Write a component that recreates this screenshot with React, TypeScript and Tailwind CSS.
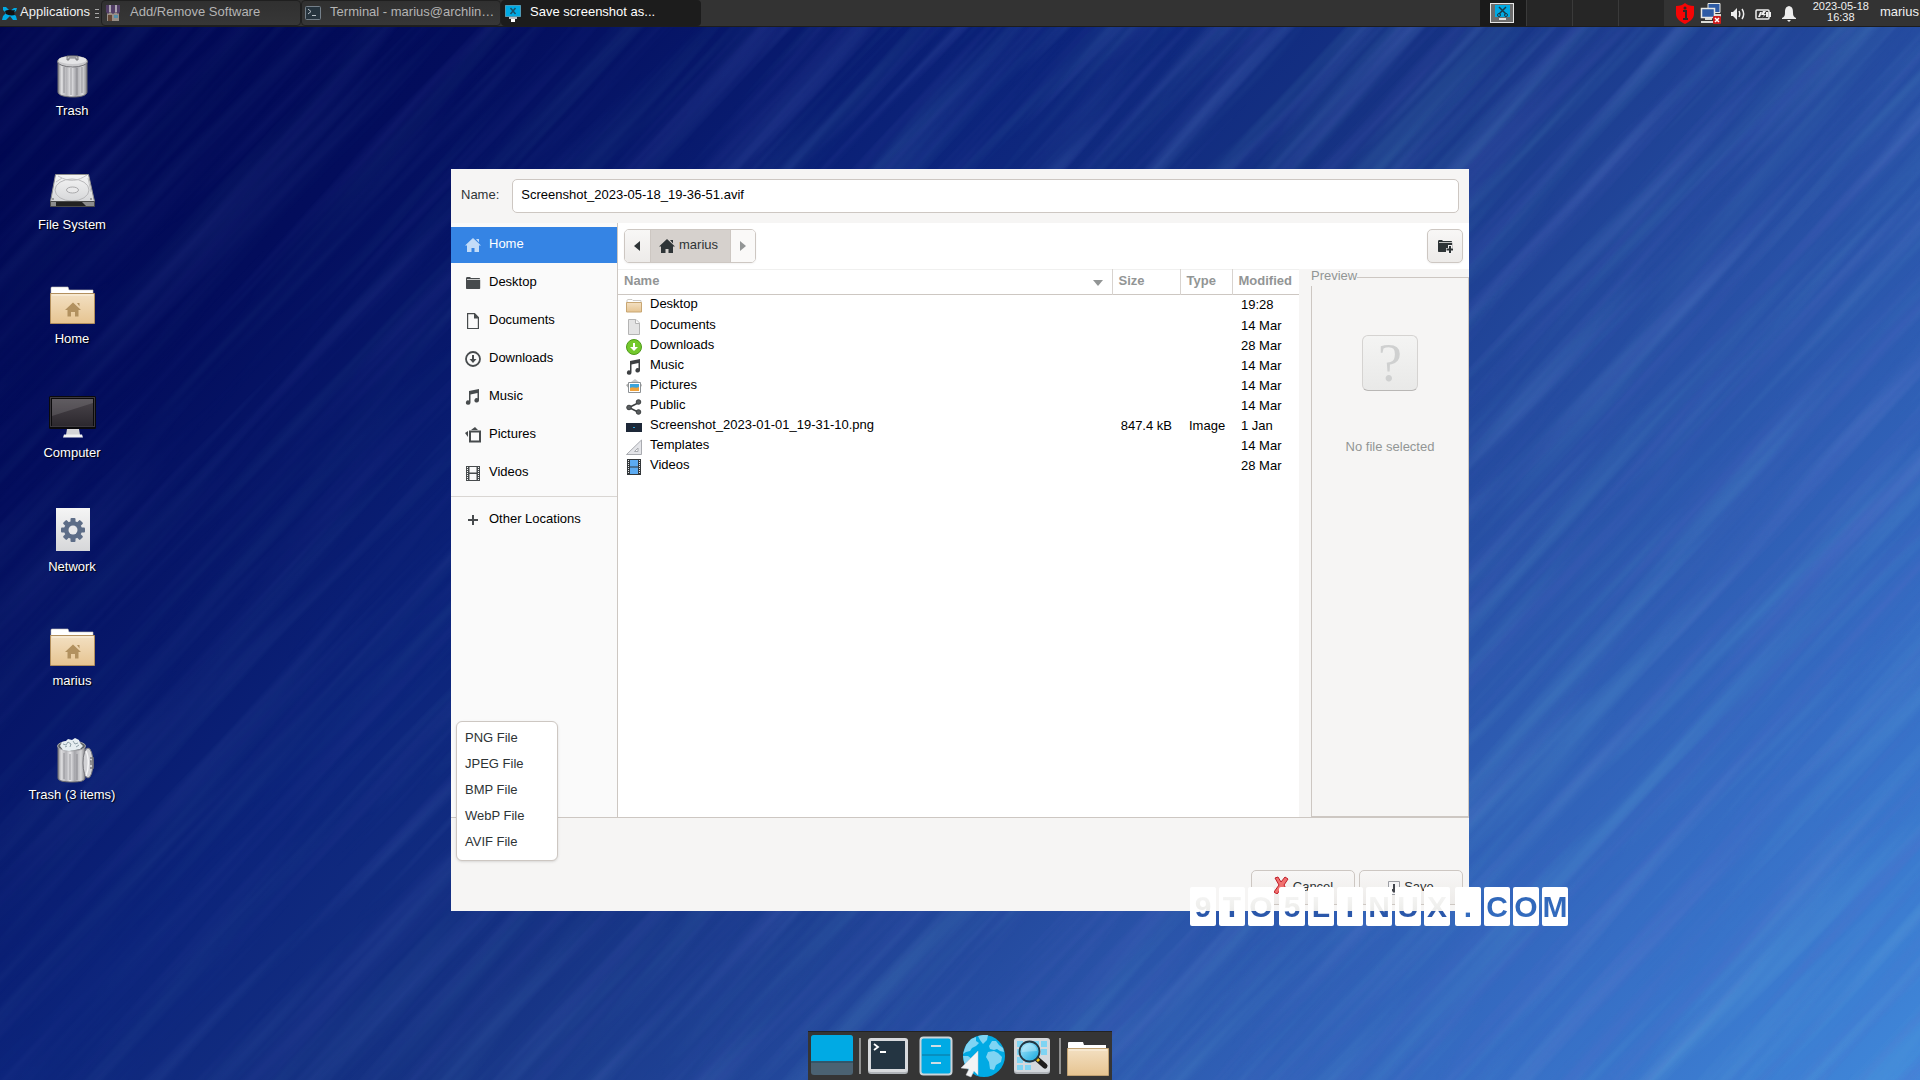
import type { ReactNode } from "react";

function Wallpaper() {
  return (
    <svg className="absolute inset-0 -z-10 h-full w-full" viewBox="0 0 1920 1080" preserveAspectRatio="none" aria-hidden="true">
      <defs>
        <linearGradient id="sky" gradientUnits="userSpaceOnUse" x1="0" y1="0" x2="1500" y2="1500">
          <stop offset="0" stopColor="#00064e" />
          <stop offset="0.17" stopColor="#030d5c" />
          <stop offset="0.36" stopColor="#0c247b" />
          <stop offset="0.5" stopColor="#163384" />
          <stop offset="0.67" stopColor="#274fa4" />
          <stop offset="0.85" stopColor="#366dc4" />
          <stop offset="1" stopColor="#4088da" />
        </linearGradient>
        <linearGradient id="fade" x1="0" y1="0" x2="1" y2="0">
          <stop offset="0" stopColor="#444" />
          <stop offset="0.5" stopColor="#bbb" />
          <stop offset="1" stopColor="#fff" />
        </linearGradient>
        <mask id="fadeMask">
          <rect width="1920" height="1080" fill="url(#fade)" />
        </mask>
        <filter id="light" x="0" y="0" width="1" height="1">
          <feTurbulence type="fractalNoise" baseFrequency="0.0022 0.045" numOctaves="3" seed="7" />
          <feColorMatrix values="0 0 0 0 0.2  0 0 0 0 0.6  0 0 0 0 0.8  2 0 0 0 -0.9" />
        </filter>
        <filter id="dark" x="0" y="0" width="1" height="1">
          <feTurbulence type="fractalNoise" baseFrequency="0.0022 0.055" numOctaves="3" seed="21" />
          <feColorMatrix values="0 0 0 0 0.12  0 0 0 0 0.15  0 0 0 0 0.6  2 0 0 0 -0.9" />
        </filter>
      </defs>
      <rect width="1920" height="1080" fill="url(#sky)" />
      <g mask="url(#fadeMask)">
        <g transform="rotate(-47 960 540)">
          <rect x="-300" y="-700" width="2500" height="2500" filter="url(#light)" opacity="0.22" />
          <rect x="-300" y="-700" width="2500" height="2500" filter="url(#dark)" opacity="0.3" />
        </g>
      </g>
    </svg>
  );
}

/* ---------- desktop icons ---------- */

function Gradients() {
  return (
    <svg className="absolute h-0 w-0" aria-hidden="true">
      <defs>
        <linearGradient id="metal" x1="0" y1="0" x2="1" y2="0">
          <stop offset="0" stopColor="#8a8a8e" />
          <stop offset="0.12" stopColor="#dcdcde" />
          <stop offset="0.3" stopColor="#b4b4b8" />
          <stop offset="0.45" stopColor="#e8e8ea" />
          <stop offset="0.62" stopColor="#a5a5aa" />
          <stop offset="0.85" stopColor="#d8d8da" />
          <stop offset="1" stopColor="#858589" />
        </linearGradient>
        <linearGradient id="paper" x1="0" y1="0" x2="0" y2="1">
          <stop offset="0" stopColor="#f5f5f5" />
          <stop offset="1" stopColor="#d6d7d9" />
        </linearGradient>
        <linearGradient id="manila" x1="0" y1="0" x2="0" y2="1">
          <stop offset="0" stopColor="#f3e0c2" />
          <stop offset="1" stopColor="#e6c491" />
        </linearGradient>
        <linearGradient id="screen" x1="0" y1="0" x2="0" y2="1">
          <stop offset="0" stopColor="#4a454b" />
          <stop offset="1" stopColor="#2c282e" />
        </linearGradient>
        <linearGradient id="lens" x1="0" y1="0" x2="1" y2="1">
          <stop offset="0" stopColor="#b5ecff" />
          <stop offset="1" stopColor="#0ea5dc" />
        </linearGradient>
      </defs>
    </svg>
  );
}

function Icon48({ children }: { children: ReactNode }) {
  return (
    <svg className="h-12 w-12 shrink-0" viewBox="0 0 48 48" aria-hidden="true">
      {children}
    </svg>
  );
}

function TrashIcon() {
  return (
    <Icon48>
      <path d="M10 10v31c0 3 6 5 15 5s14-2 14-5V10z" fill="url(#metal)" stroke="#6d6d72" />
      <path d="M16 16v26M23 17v27M29 17v27M34 16v26" stroke="#828288" strokeWidth="2" opacity="0.4" />
      <ellipse cx="24.500" cy="10.500" rx="15" ry="5.500" fill="#c9c9cc" stroke="#727277" />
      <ellipse cx="24.500" cy="9" rx="14" ry="4" fill="#e4e4e6" />
      <path d="M19 9V5h11v4h-2V7h-7v2z" fill="#bcbcbf" stroke="#66666b" strokeWidth="0.800" />
    </Icon48>
  );
}

function FullTrashIcon() {
  return (
    <Icon48>
      <path d="M10 12v31c0 3 6 4 14 4s13-1 13-4V12z" fill="url(#metal)" stroke="#6d6d72" />
      <path d="M16 18v26M22 19v26M29 19v26" stroke="#828288" strokeWidth="2" opacity="0.4" />
      <ellipse cx="23.500" cy="11" rx="14" ry="5" fill="#5f6468" stroke="#a8a8ac" />
      <path d="M12 11l2-4 4-1 2-2 4 1 3-2 4 2 1 3 3 3-3 3-5 1-6 1-6-1z" fill="#e6eef1" />
      <path d="M15 9l3 1 2-3 3 2-1 3M25 6l2 3 3-1M28 12l3-2M17 12l2-1" stroke="#8fa1a8" fill="none" />
      <ellipse cx="40" cy="28" rx="5" ry="15" fill="#d2d2d5" stroke="#77777c" />
      <path d="M38 16c3 6 3 18 0 25" stroke="#f5f5f6" fill="none" strokeWidth="1.500" />
      <path d="M42 23h3v10h-3M42 26h1v4" fill="none" stroke="#77777c" strokeWidth="1.500" />
    </Icon48>
  );
}

function DriveIcon() {
  return (
    <Icon48>
      <path d="M7.500 9.500h33l6 27h-44z" fill="url(#paper)" stroke="#8f8f8f" />
      <ellipse cx="24" cy="25" rx="17" ry="11" fill="none" stroke="#b8b8ba" />
      <ellipse cx="24.500" cy="25" rx="6" ry="3" fill="#e9e9ea" stroke="#aaaaac" />
      <path d="M10 11c12 7 20 5 29-1M8 17l6-4M40 13l3 14" stroke="#c2c2c4" fill="none" />
      <circle cx="5" cy="34" r="1" fill="#888" />
      <circle cx="43" cy="34" r="1" fill="#888" />
      <path d="M2.500 36.500h44v5h-44z" fill="#8d8d8d" stroke="#4a4a4a" />
      <path d="M8 37h26l4 4H8z" fill="#222" />
    </Icon48>
  );
}

function FolderShape() {
  return (
    <>
      <path d="M3 9a1 1 0 0 1 1-1h16l1 3h24v6H3z" fill="#fff" stroke="#c7c3bb" strokeWidth="0.600" />
      <path d="M2.500 14.500h44v30h-44z" fill="url(#manila)" stroke="#b28f5d" />
      <path d="M4 16h41" stroke="#fbf2e1" />
    </>
  );
}

function HomeFolderIcon() {
  return (
    <Icon48>
      <FolderShape />
      <path d="M25 23.500l8 7.500h-2.500v6.500H27V33h-4v4.500h-3.500V31H17zM29 24h2.500v3.500z" fill="#b2915f" />
    </Icon48>
  );
}

function ComputerIcon() {
  return (
    <Icon48>
      <path d="M19 36h12l1 6H18z" fill="#d5d5d7" />
      <path d="M16 41.500h18l1 3H15z" fill="#f2f2f2" />
      <rect x="1" y="3" width="47" height="33" rx="1.500" fill="#0b0a0c" />
      <rect x="2.500" y="4.500" width="44" height="29" fill="none" stroke="#3b383d" />
      <rect x="4" y="6" width="41" height="27" fill="url(#screen)" />
      <path d="M4 6h41v4L4 23z" fill="#fff" opacity="0.12" />
    </Icon48>
  );
}

function NetworkIcon() {
  return (
    <Icon48>
      <rect x="8" y="1" width="34" height="43" fill="url(#paper)" />
      <g fill="#5d6d87">
        <circle cx="25" cy="23" r="9" />
        {[0, 45, 90, 135, 180, 225, 270, 315].map((a) => (
          <rect key={a} x="22.500" y="11" width="5" height="6" rx="1" transform={`rotate(${a} 25 23)`} />
        ))}
      </g>
      <circle cx="25" cy="23" r="4.500" fill="#e9e9ea" />
    </Icon48>
  );
}

const desktopItems = [
  { label: "Trash", icon: <TrashIcon /> },
  { label: "File System", icon: <DriveIcon /> },
  { label: "Home", icon: <HomeFolderIcon /> },
  { label: "Computer", icon: <ComputerIcon /> },
  { label: "Network", icon: <NetworkIcon /> },
  { label: "marius", icon: <HomeFolderIcon /> },
  { label: "Trash (3 items)", icon: <FullTrashIcon /> },
];

/* ---------- top panel ---------- */

function XfceMouse() {
  return (
    <svg className="h-4 w-4 shrink-0" viewBox="0 0 16 16" aria-hidden="true">
      <path d="M1 2l3 0 4 4 4-3 3 0-1 3-3 2 3 3 1 4-4 0-3-4-4 4-4 0 1-4 3-3-3-3z" fill="#00aae4" />
      <path d="M3 6c3-2 6 0 10-1-1 2-1 4 0 5-4 1-7 0-9-1z" fill="#111" />
    </svg>
  );
}

function ShopIcon() {
  return (
    <svg className="h-5 w-4 shrink-0 opacity-80" viewBox="0 0 16 20" aria-hidden="true">
      <rect x="2" y="7" width="12" height="11" fill="#b0a49b" />
      <path d="M1 2h14v7l-2 2-2-2-3 2-3-2-2 2-2-2z" fill="#5a4173" />
      <path d="M4 2h2v7H4zM10 2h2v7h-2z" fill="#c9c0d0" />
      <rect x="3" y="12" width="4" height="6" fill="#6e4b36" />
      <rect x="9" y="12" width="4" height="3" fill="#5aa3c7" />
    </svg>
  );
}

function TermIcon() {
  return (
    <svg className="h-5 w-4 shrink-0" viewBox="0 0 16 20" aria-hidden="true">
      <rect x="0.500" y="3.500" width="15" height="13" rx="1" fill="#26343e" stroke="#75808a" />
      <path d="M3 6l3 2.500L3 11M7 12.500h4" stroke="#b8c0c6" fill="none" />
    </svg>
  );
}

function ShotIcon() {
  return (
    <svg className="h-5 w-4 shrink-0" viewBox="0 0 16 20" aria-hidden="true">
      <rect x="0.500" y="2.500" width="15" height="11" fill="#00aae4" stroke="#8fd3ec" strokeDasharray="1 1" />
      <path d="M5.500 5l5 6M10.500 5l-5 6" stroke="#1b4f66" strokeWidth="1.500" />
      <path d="M4 14h8v2H4z" fill="#b9bec3" />
      <path d="M6 16h4v3H6z" fill="#fff" />
    </svg>
  );
}

const tasks = [
  { title: "Add/Remove Software", icon: <ShopIcon />, active: false },
  { title: "Terminal - marius@archlin…", icon: <TermIcon />, active: false },
  { title: "Save screenshot as...", icon: <ShotIcon />, active: true },
];

function Tray() {
  return (
    <div className="flex items-center pl-3">
      <svg className="h-6 w-[18px]" viewBox="0 0 18 24" aria-label="Updates">
        <path d="M9 2c2 2 5 3 9 3v8c0 5-5 8-9 10-4-2-9-5-9-10V5c4 0 7-1 9-3z" fill="#f50505" />
        <path d="M7 10h3v8M7 18h5" stroke="#2b2b2b" strokeWidth="2" fill="none" />
        <circle cx="9" cy="7" r="1.500" fill="#2b2b2b" />
      </svg>
      <svg className="ml-[6px] h-6 w-[22px]" viewBox="0 0 22 24" aria-label="Network">
        <path d="M8 2.500h12v9H8z" fill="#2e5ba5" stroke="#e8e8e4" />
        <path d="M14 13h7v3h-7z" fill="#dcdcd6" />
        <path d="M1.500 7.500h13v9h-13z" fill="#2e5ba5" stroke="#e8e8e4" strokeWidth="1.500" />
        <path d="M5 17h7v2H5zM1 20h13v2H1z" fill="#dcdcd6" />
        <rect x="13" y="15" width="8" height="8" rx="1" fill="#cc1b1b" />
        <path d="M15 17l4 4M19 17l-4 4" stroke="#fff" strokeWidth="1.500" />
      </svg>
      <svg className="ml-[8px] h-6 w-4" viewBox="0 0 16 24" aria-label="Volume">
        <path d="M1 11h2l4-4v12l-4-4H1z" fill="#eee" />
        <path d="M9 10c1 2 1 4 0 6M12 8c2 3 2 7 0 10" stroke="#eee" strokeWidth="1.500" fill="none" />
      </svg>
      <svg className="ml-[9px] h-6 w-4" viewBox="0 0 16 24" aria-label="Battery">
        <rect x="1" y="9" width="13" height="9" rx="1" fill="none" stroke="#eee" strokeWidth="1.500" />
        <path d="M15 11v5" stroke="#eee" strokeWidth="2" />
        <path d="M3 16l2-5h2L5 16zM8 10l-2 4h3l-2 3 4-4H9l2-3zM11 11h2v5h-2z" fill="#eee" />
      </svg>
      <svg className="ml-[10px] h-6 w-4" viewBox="0 0 16 24" aria-label="Notifications">
        <path d="M8 5c4 1 4 4 4 7 0 3 1 4 3 5v1H1v-1c2-1 3-2 3-5 0-3 0-6 4-7z" fill="#eee" />
        <path d="M6 19h4l-2 2z" fill="#eee" />
      </svg>
    </div>
  );
}

function TopPanel() {
  return (
    <header className="flex h-[27px] items-stretch border-b border-[#1d1d1d] bg-[#333333] text-[13px] text-[#f0f0f0]">
      <button className="flex items-center gap-[2px] pl-[2px]">
        <XfceMouse />
        <span className="pb-[3px]">Applications</span>
      </button>
      <div className="mr-[2px] ml-[5px] flex flex-col justify-center gap-[3px]">
        <i className="h-px w-1 bg-[#aaa]" />
        <i className="h-px w-1 bg-[#aaa]" />
        <i className="h-px w-1 bg-[#aaa]" />
      </div>
      <nav className="flex flex-1 items-stretch">
        {tasks.map((t) => (
          <button
            key={t.title}
            className={
              t.active
                ? "flex w-[200px] items-center gap-[9px] rounded-sm bg-[#1c1c1c] pr-1 pl-1 text-left text-white"
                : "flex w-[200px] items-center gap-[9px] rounded-sm border border-[#1f1f1f] bg-linear-to-b from-[#303030] to-[#373737] pl-[3px] text-left text-[#b4b4b4]"
            }
          >
            {t.icon}
            <span className="pb-[3px] whitespace-nowrap">{t.title}</span>
          </button>
        ))}
      </nav>
      <div className="flex">
        <button aria-label="Workspace 1" className="flex w-[46px] items-center justify-center bg-[#1a1a1a] pr-[2px]">
          <svg className="h-[20px] w-6" viewBox="0 0 24 20" aria-hidden="true">
            <rect x="0.500" y="0.500" width="23" height="19" fill="#6c6c6c" stroke="#e6e6e6" />
            <rect x="5" y="2" width="15" height="12" fill="#00aae4" />
            <path d="M9 4l7 7M16 4l-7 7" stroke="#1b3947" strokeWidth="1.500" />
            <circle cx="9" cy="12" r="1.500" fill="none" stroke="#1b3947" />
            <circle cx="16" cy="12" r="1.500" fill="none" stroke="#1b3947" />
            <path d="M9 15h7v2H9z" fill="#ddd" />
          </svg>
        </button>
        <button aria-label="Workspace 2" className="w-[46px] border-l border-[#3a3a3a] bg-[#262626]" />
        <button aria-label="Workspace 3" className="w-[46px] border-l border-[#3a3a3a] bg-[#262626]" />
        <button aria-label="Workspace 4" className="w-[46px] border-l border-[#3a3a3a] bg-[#262626]" />
      </div>
      <Tray />
      <div className="ml-4 flex flex-col items-center text-[11px] leading-[11px]">
        <span className="pt-px">2023-05-18</span>
        <span>16:38</span>
      </div>
      <button className="ml-[11px] pr-px pb-[2px]">marius</button>
    </header>
  );
}

/* ---------- file chooser icons, 16px ---------- */

function Icon16({ children }: { children: ReactNode }) {
  return (
    <svg className="h-4 w-4 shrink-0" viewBox="0 0 16 16" fill="currentColor" aria-hidden="true">
      {children}
    </svg>
  );
}

const house = <path d="M8 1l8 7.500h-2V15H9.500v-4h-3v4H2V8.500H0zM11 2h3v3.500z" />;
const symFolder = <path d="M1 3.500C1 2.500 1.500 2 2.500 2H5l1 1h8c.7 0 1 .4 1 1H2v.800h13.200V13c0 .6-.4 1-1 1H2c-.6 0-1-.4-1-1z" />;
const note = (
  <path d="M4 2L14 0v11.500a2.300 2.200 0 1 1-1.500-2.300V4L5.500 5.400v8.100A2.300 2.200 0 1 1 4 11.500z" />
);

const places = [
  { label: "Home", icon: house },
  { label: "Desktop", icon: symFolder },
  {
    label: "Documents",
    icon: (
      <>
        <path d="M2.600.6h7l3.800 4v11H2.600z" fill="none" stroke="currentColor" strokeWidth="1.200" />
        <path d="M9 0v5.500h5z" />
      </>
    ),
  },
  {
    label: "Downloads",
    icon: (
      <>
        <circle cx="8" cy="8" r="7" fill="none" stroke="currentColor" strokeWidth="1.800" />
        <path d="M7 4h2v4h2.500L8 12 4.500 8H7z" />
      </>
    ),
  },
  { label: "Music", icon: note },
  {
    label: "Pictures",
    icon: (
      <>
        <path d="M5 4.500h10v10H5z" fill="none" stroke="currentColor" strokeWidth="2" />
        <path d="M6 3l4-3 3 3zM0 6l3-2v6z" />
      </>
    ),
  },
  {
    label: "Videos",
    icon: (
      <>
        <path d="M1 1h14v15H1zM4.500 2v5.500h7V2zM4.500 9v6h7V9z" fillRule="evenodd" />
        <path d="M2.500 2v13M13.500 2v13" stroke="#fafafa" strokeDasharray="1 1" />
      </>
    ),
  },
];

const fileIcons = {
  folder: (
    <>
      <path d="M1 2.500C1 2 1.500 1.500 2 1.500h4l1 1h8v3H1z" fill="#fff" stroke="#b9b5ae" strokeWidth="0.700" />
      <path d="M.5 4.500h15v9.500H.5z" fill="url(#manila)" stroke="#c8a672" />
    </>
  ),
  doc: (
    <>
      <path d="M2.500.5H10l3.500 3.500v11.500h-11z" fill="#e4e4e4" stroke="#b4b4b4" />
      <path d="M9.500.5V4.500h4" fill="#fafafa" stroke="#b4b4b4" />
    </>
  ),
  down: (
    <>
      <circle cx="8" cy="8" r="7.500" fill="#74c92d" stroke="#4e9a1a" />
      <path d="M7 4h2v4h3l-4 4-4-4h3z" fill="#fff" />
    </>
  ),
  music: <g fill="#3d4042">{note}</g>,
  pictures: (
    <>
      <path d="M5 3l4-3 4 3z" fill="#c4c7c9" />
      <path d="M0 6l3-2v6zM16 6l-2-2v6z" fill="#aaa" />
      <path d="M2.500 3.500h12v10h-12z" fill="#fff" stroke="#8d9194" />
      <path d="M4 5h9v4H4z" fill="#3aa4dd" />
      <path d="M4 9c3-2 5 1 9-1v4H4z" fill="#efa13a" />
    </>
  ),
  share: (
    <g fill="#585c5e" stroke="#3d4042">
      <path d="M3 8.500l10-5M3 8.500l10 5" strokeWidth="1.500" />
      <circle cx="3" cy="8.500" r="2.300" />
      <circle cx="12.500" cy="3" r="2.300" />
      <circle cx="12.500" cy="13" r="2.300" />
    </g>
  ),
  shot: (
    <>
      <path d="M0 4h16v9H0z" fill="#1d2838" />
      <path d="M7 8h2v1H7z" fill="#2aa0d8" />
    </>
  ),
  template: (
    <>
      <path d="M15.500 1v14.500H.5z" fill="#e3e4e8" stroke="#a9abb0" />
      <path d="M12 9v3.500H8.500z" fill="#fff" stroke="#a9abb0" />
    </>
  ),
  video: (
    <>
      <path d="M1 0h14v16H1z" fill="#33373a" />
      <path d="M2.500 1v14M13.500 1v14" stroke="#e8e8e8" strokeDasharray="1 1" />
      <path d="M4 1h8v6.500H4zM4 8.500h8V15H4z" fill="#5cabf2" />
    </>
  ),
};

type FileRow = { name: string; icon: keyof typeof fileIcons; size?: string; type?: string; modified: string };

const files: FileRow[] = [
  { name: "Desktop", icon: "folder", modified: "19:28" },
  { name: "Documents", icon: "doc", modified: "14 Mar" },
  { name: "Downloads", icon: "down", modified: "28 Mar" },
  { name: "Music", icon: "music", modified: "14 Mar" },
  { name: "Pictures", icon: "pictures", modified: "14 Mar" },
  { name: "Public", icon: "share", modified: "14 Mar" },
  { name: "Screenshot_2023-01-01_19-31-10.png", icon: "shot", size: "847.4 kB", type: "Image", modified: "1 Jan" },
  { name: "Templates", icon: "template", modified: "14 Mar" },
  { name: "Videos", icon: "video", modified: "28 Mar" },
];

const formats = ["PNG File", "JPEG File", "BMP File", "WebP File", "AVIF File"];

/* ---------- save dialog ---------- */

function PlacesSidebar() {
  return (
    <aside className="w-[167px] shrink-0 border-r border-[#cdc7c2] bg-[#fafafa] pt-1">
      <ul className="flex flex-col gap-[2px]">
        {places.map((p, i) => (
          <li key={p.label}>
            <button
              className={
                i === 0
                  ? "flex h-9 w-full items-center gap-2 bg-[#3584e4] pl-[14px] text-[#c3dcf8]"
                  : "flex h-9 w-full items-center gap-2 pl-[14px] text-[#474b4d]"
              }
            >
              <Icon16>{p.icon}</Icon16>
              <span className={i === 0 ? "pb-[3px] text-white" : "pb-[3px] text-black"}>{p.label}</span>
            </button>
          </li>
        ))}
      </ul>
      <div className="mt-[5px] border-t border-[#d9d6d3] pt-[5px]">
        <button className="flex h-9 w-full items-center gap-2 pl-[14px] text-[#474b4d]">
          <Icon16>
            <path d="M7 3h2v4h4v2H9v4H7V9H3V7h4z" />
          </Icon16>
          <span className="pb-[3px] text-black">Other Locations</span>
        </button>
      </div>
    </aside>
  );
}

function PathBar() {
  return (
    <div className="flex h-[46px] items-start justify-between bg-white pt-[6px] pr-[6px] pl-[6px]">
      <div className="flex h-[34px] overflow-hidden rounded-[5px] border border-[#cdc7c2] text-[#2e3436] shadow-xs">
        <button aria-label="Back" className="flex w-[25px] items-center justify-center bg-linear-to-b from-[#f8f7f6] to-[#edebe9] pr-[2px]">
          <svg className="h-[10px] w-[6px]" viewBox="0 0 6 10" aria-hidden="true">
            <path d="M6 0v10L0 5z" fill="#2e3436" />
          </svg>
        </button>
        <button className="flex w-[81px] items-center gap-1 border-x border-[#cdc7c2] bg-[#d6d1cd] pl-2">
          <Icon16>{house}</Icon16>
          <span className="pb-[3px]">marius</span>
        </button>
        <button aria-label="Forward" disabled className="flex w-6 items-center justify-center bg-[#faf9f8]">
          <svg className="h-[10px] w-[6px]" viewBox="0 0 6 10" aria-hidden="true">
            <path d="M0 0v10l6-5z" fill="#929595" />
          </svg>
        </button>
      </div>
      <button
        aria-label="Create Folder"
        className="flex h-[34px] w-9 items-center justify-center rounded-[5px] border border-[#cdc7c2] bg-linear-to-b from-[#f8f7f6] to-[#edebe9] text-[#2e3436] shadow-xs"
      >
        <Icon16>
          {symFolder}
          <path d="M11 7h4v3h2v4h-2v3h-4v-3H9v-4h2z" fill="#f2f1f0" />
          <path d="M12 8h2v2.500h2.500v2H14V15h-2v-2.500H9.500v-2H12z" />
        </Icon16>
      </button>
    </div>
  );
}

function FileList() {
  return (
    <div className="min-w-0 flex-1 bg-white">
      <table className="w-full table-fixed border-collapse border-spacing-0 text-black">
        <colgroup>
          <col />
          <col className="w-[68px]" />
          <col className="w-[52px]" />
          <col className="w-[67px]" />
        </colgroup>
        <thead>
          <tr className="h-[25px] border-t border-b border-t-[#f0f0ef] border-b-[#cdc7c2] text-left text-[#929595]">
            <th className="p-0 pb-[2px] pl-[6px] font-bold">
              <div className="flex items-center justify-between">
                Name
                <svg className="mt-[3px] mr-[9px] h-[6px] w-[10px]" viewBox="0 0 10 6" aria-hidden="true">
                  <path d="M0 0h10L5 6z" fill="#929595" />
                </svg>
              </div>
            </th>
            <th className="border-l border-[#d8d3cf] p-0 pb-[2px] pl-[6px] font-bold">Size</th>
            <th className="border-l border-[#d8d3cf] p-0 pb-[2px] pl-[6px] font-bold">Type</th>
            <th className="border-l border-[#d8d3cf] p-0 pb-[2px] pl-[6px] font-bold">Modified</th>
          </tr>
        </thead>
        <tbody>
          {files.map((f) => (
            <tr key={f.name} className="h-5 leading-4 first:h-[22px]">
              <td className="p-0 pl-2">
                <div className="flex items-center gap-2">
                  <Icon16>{fileIcons[f.icon]}</Icon16>
                  <span className="-mt-[3px]">{f.name}</span>
                </div>
              </td>
              <td className="p-0 pr-2 pb-[2px] text-right whitespace-nowrap">{f.size}</td>
              <td className="p-0 pb-[2px] pl-[9px]">{f.type}</td>
              <td className="p-0 pb-[2px] pl-[9px]">{f.modified}</td>
            </tr>
          ))}
        </tbody>
      </table>
    </div>
  );
}

function Preview() {
  return (
    <div className="flex w-[170px] shrink-0 flex-col bg-[#f6f5f4] pl-3 text-[#929595]">
      <fieldset className="flex flex-1 flex-col border border-[#cdc7c2]">
        <legend className="-ml-px h-[17px] pb-[3px] leading-[14px]">Preview</legend>
        <div className="flex flex-col items-center pt-[49px]">
          <div className="flex h-14 w-14 items-center justify-center rounded-md border border-[#d5d3d1] border-b-[#b9b7b5] bg-linear-to-b from-[#f4f4f3] to-[#e9e9e8] font-['Liberation_Serif',serif] text-[54px] leading-none text-[#cfd0d0]">
            ?
          </div>
          <p className="mt-12 leading-4">No file selected</p>
        </div>
      </fieldset>
    </div>
  );
}

function SaveDialog() {
  return (
    <section role="dialog" aria-label="Save screenshot as..." className="relative flex h-[742px] w-[1018px] flex-col bg-[#f6f5f4] text-[13px] text-[#2e3436]">
      <div className="flex h-[54px] items-start gap-[13px] px-[10px] pt-[10px]">
        <label htmlFor="file-name" className="pt-[6px] leading-5">
          Name:
        </label>
        <input
          id="file-name"
          type="text"
          defaultValue="Screenshot_2023-05-18_19-36-51.avif"
          className="h-[34px] min-w-0 flex-1 rounded-[5px] border border-[#cdc7c2] bg-white px-2 pb-[3px] text-black outline-none"
        />
      </div>
      <div className="flex min-h-0 flex-1 border-b border-[#cdc7c2]">
        <PlacesSidebar />
        <div className="flex min-w-0 flex-1 flex-col">
          <PathBar />
          <div className="flex flex-1">
            <FileList />
            <Preview />
          </div>
        </div>
      </div>
      <div className="flex h-[93px] items-end justify-end gap-1 pr-[6px] pb-[6px]">
        <button className="flex h-[35px] w-[104px] items-center justify-center gap-1 rounded-[5px] border border-[#cdc7c2] bg-linear-to-b from-[#f8f7f6] to-[#edebe9]">
          <svg className="-mt-[6px] h-[18px] w-4" viewBox="0 0 16 18" aria-hidden="true">
            <path d="M2 2l3-1 3 5 4-5 3 2-4 6 4 7-4 1-3-4-4 5-3-2 5-7z" fill="#f0716f" stroke="#c01c28" />
          </svg>
          <span className="pb-px">Cancel</span>
        </button>
        <button className="flex h-[35px] w-[104px] items-center justify-center gap-1 rounded-[5px] border border-[#cdc7c2] bg-linear-to-b from-[#f8f7f6] to-[#edebe9]">
          <svg className="h-4 w-3" viewBox="0 0 12 16" aria-hidden="true">
            <path d="M.5 1.500h11v13H.5z" fill="#f4f4f6" stroke="#9b9da3" />
            <path d="M5 4h2v5h3l-4 4-4-4h3z" fill="#42454d" />
          </svg>
          <span className="pb-px">Save</span>
        </button>
      </div>

      {/* File format menu */}
      <ul role="menu" className="absolute bottom-[50px] left-[5px] w-[102px] rounded-md border border-[#cdc7c2] bg-white pt-[3px] pb-[5px] shadow-sm">
        {formats.map((f) => (
          <li key={f} role="none">
            <button role="menuitem" className="block h-[26px] w-full pl-2 text-left">
              {f}
            </button>
          </li>
        ))}
      </ul>
    </section>
  );
}

/* ---------- bottom dock ---------- */

function Globe() {
  return (
    <Icon48>
      <circle cx="24" cy="24" r="21" fill="#00aae4" />
      <path d="M18 4l5-1h5l-1 5-4 4-3-4zM6 13l5-6 5-2 0 4 3 2-3 3-4 2-2 3-4 1-3 2zM3 24l5 0 4 3 0 5-5 4-3-6zM29 14l3-5 4 0 3 4 4 3 1 4-4-1-3-2-3 1-4-1zM28 20l6-1 4 2 4 4-1 5-5 3-2 5-4-1-1-7-3-5z" fill="#7fd4f3" />
      <path d="M18 19v24l-4-4-3 6-5-2 3-6-8-1z" fill="#f3f4f5" stroke="#c9ccd0" strokeWidth="0.500" />
    </Icon48>
  );
}

function Dock() {
  return (
    <footer className="absolute bottom-0 left-1/2 flex -translate-x-1/2 items-center border-t border-[#222] bg-[#353535]">
      <button aria-label="Show Desktop">
        <Icon48>
          <rect x="3" y="3" width="42" height="40" rx="3" fill="#4b6272" />
          <path d="M3 29V6a3 3 0 0 1 3-3h36a3 3 0 0 1 3 3v23z" fill="#00aae4" />
          <path d="M3 30h42" stroke="#1d4a60" />
        </Icon48>
      </button>
      <i className="mx-[3px] h-9 w-[2px] bg-[#8f8f8f]" />
      <button aria-label="Terminal Emulator">
        <Icon48>
          <rect x="4" y="7" width="40" height="35" rx="3" fill="#b0b4b9" />
          <rect x="4" y="6" width="40" height="34" rx="3" fill="#d8dadd" />
          <rect x="7" y="9" width="34" height="28" fill="#243542" />
          <path d="M10 12l4 3-4 3M16 20h6" stroke="#fff" strokeWidth="1.800" fill="none" />
        </Icon48>
      </button>
      <button aria-label="File Manager">
        <Icon48>
          <rect x="8.500" y="5.500" width="31" height="37" rx="3" fill="#00aae4" stroke="#ccd4d9" strokeWidth="2" />
          <path d="M10 23h28" stroke="#0a86b3" strokeWidth="1.500" />
          <path d="M20 15v-1h8v1M20 32v-1h8v1" stroke="#cfdde4" strokeWidth="2" fill="none" />
        </Icon48>
      </button>
      <button aria-label="Web Browser">
        <Globe />
      </button>
      <button aria-label="Application Finder">
        <Icon48>
          <rect x="6" y="7" width="36" height="35" rx="3" fill="#b0b4b9" />
          <rect x="6" y="6" width="36" height="34" rx="3" fill="#d4d8dc" />
          <path d="M9 9h6v6H9zM17 9h6v6h-6zM25 9h6v6h-6zM33 9h6v6h-6zM9 17h6v6H9zM33 17h6v6h-6zM9 25h6v6H9zM17 25h6v6h-6zM9 33h6v5H9zM17 33h6v5h-6z" fill="#7fd4f3" />
          <path d="M29 27l8 7" stroke="#1d1d1d" strokeWidth="5" strokeLinecap="round" />
          <path d="M28 26l3 3" stroke="#f0c419" strokeWidth="3" />
          <circle cx="21.500" cy="19.500" r="10" fill="url(#lens)" stroke="#223642" strokeWidth="1.800" />
          <path d="M14 20a7.500 7.500 0 0 1 15-1z" fill="#fff" opacity="0.300" />
        </Icon48>
      </button>
      <i className="mx-[3px] h-9 w-[2px] bg-[#8f8f8f]" />
      <button aria-label="Home Folder">
        <Icon48>
          <path d="M4 11a1 1 0 0 1 1-1h14l1 3h22v6H4z" fill="#fff" />
          <path d="M3.500 16.500h41v27h-41z" fill="url(#manila)" stroke="#c2a272" />
          <path d="M5 18h38" stroke="#fbf2e1" />
        </Icon48>
      </button>
    </footer>
  );
}

function Watermark() {
  return (
    <div className="absolute top-[887px] left-[1190px] flex gap-[3px] text-[30px] leading-[39px] font-bold">
      {"9TO5LINUX.COM".split("").map((c, i) => (
        <span key={i} className={i === 3 || i === 9 ? "ml-[2px] w-[26px] rounded-xs bg-white text-center" : "w-[26px] rounded-xs bg-white text-center"}>
          <span
            className={
              i < 9
                ? "block bg-[linear-gradient(#fafaf9,#ececea_24px,#2a57aa_24px)] bg-clip-text text-transparent"
                : "block bg-linear-to-b from-[#2f66b8] to-[#346dc0] bg-clip-text text-transparent"
            }
          >
            {c}
          </span>
        </span>
      ))}
    </div>
  );
}

export default function App() {
  return (
    <div className="relative isolate flex min-h-screen flex-col overflow-hidden font-['Liberation_Sans',Arial,sans-serif] text-[13px]">
      <Wallpaper />
      <Gradients />
      <TopPanel />
      <main className="flex-1">
        <ul className="flex w-[144px] flex-col gap-[45px] pt-6">
          {desktopItems.map((d) => (
            <li key={d.label}>
              <button className="flex w-full flex-col items-center gap-[3px] text-white">
                {d.icon}
                <span className="leading-[18px] text-shadow-[1px_1px_1px_#000]">{d.label}</span>
              </button>
            </li>
          ))}
        </ul>
      </main>
      <div className="absolute inset-0 left-[150px] flex items-center justify-center pr-[150px]">
        <SaveDialog />
      </div>
      <Watermark />
      <Dock />
    </div>
  );
}
